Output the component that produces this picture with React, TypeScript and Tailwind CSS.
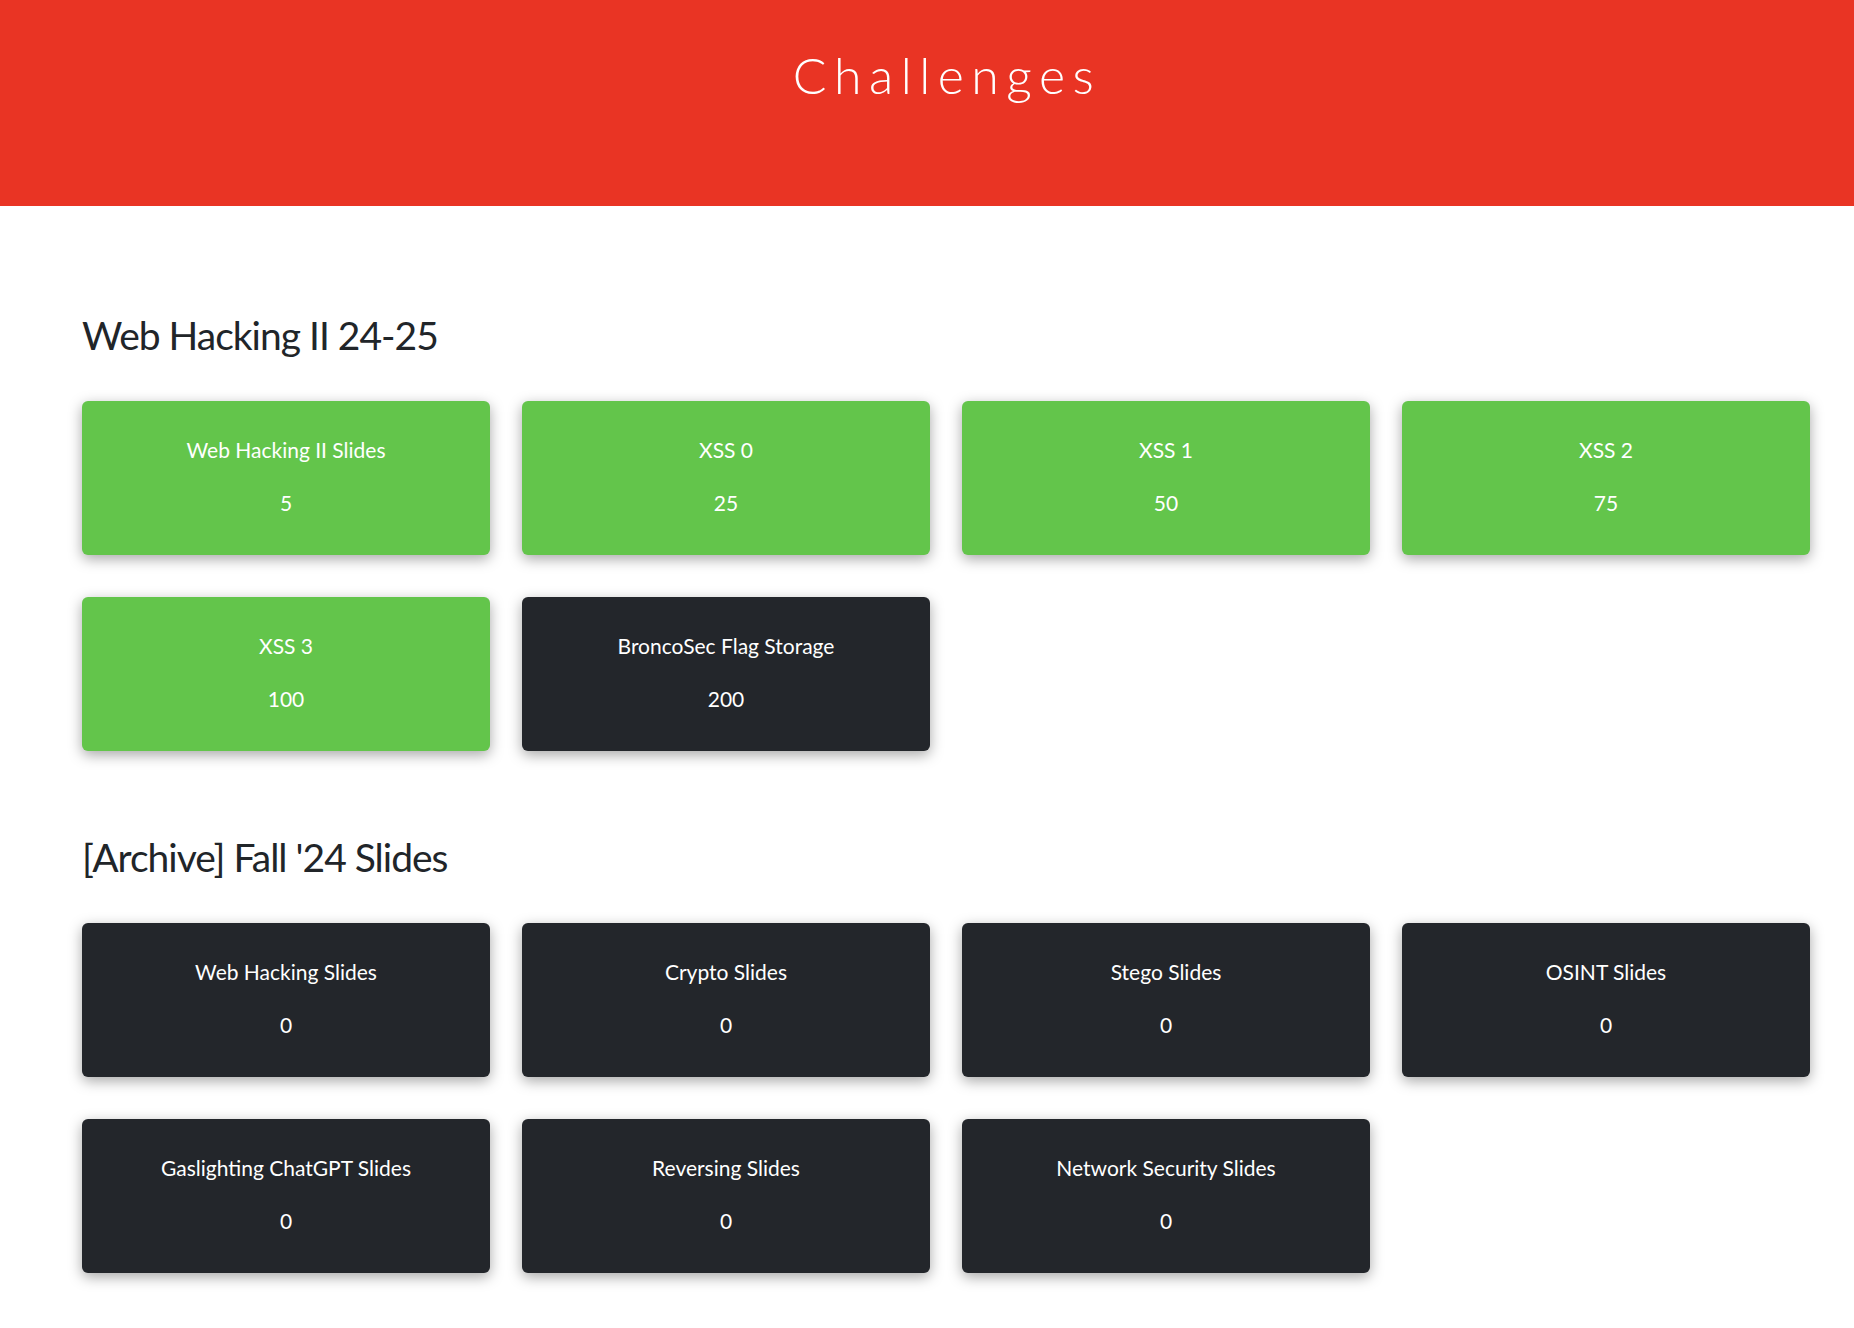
const sections = [
  {
    title: "Web Hacking II 24-25",
    items: [
      { name: "Web Hacking II Slides", points: 5, solved: true },
      { name: "XSS 0", points: 25, solved: true },
      { name: "XSS 1", points: 50, solved: true },
      { name: "XSS 2", points: 75, solved: true },
      { name: "XSS 3", points: 100, solved: true },
      { name: "BroncoSec Flag Storage", points: 200, solved: false },
    ],
  },
  {
    title: "[Archive] Fall '24 Slides",
    items: [
      { name: "Web Hacking Slides", points: 0, solved: false },
      { name: "Crypto Slides", points: 0, solved: false },
      { name: "Stego Slides", points: 0, solved: false },
      { name: "OSINT Slides", points: 0, solved: false },
      { name: "Gaslighting ChatGPT Slides", points: 0, solved: false },
      { name: "Reversing Slides", points: 0, solved: false },
      { name: "Network Security Slides", points: 0, solved: false },
    ],
  },
];

function ChallengeCard({
  name,
  points,
  solved,
}: {
  name: string;
  points: number;
  solved: boolean;
}) {
  return (
    <button
      className={
        "flex h-[154px] flex-col items-center rounded-[6px] pt-[36px] text-white shadow-[0_4px_14px_rgba(0,0,0,0.35)] " +
        (solved ? "bg-[#63c54b]" : "bg-[#23262b]")
      }
    >
      <span className="text-[21px] leading-[25px]">{name}</span>
      <span className="mt-[28px] text-[21px] leading-[25px]">{points}</span>
    </button>
  );
}

export default function App() {
  return (
    <div
      className="min-h-screen bg-white text-[#212529]"
      style={{ fontFamily: "Lato, 'Open Sans', sans-serif" }}
    >
      <header className="flex h-[206px] justify-center bg-[#e93424] pt-[45px]">
        <h1 className="ml-[40px] text-[50px] font-light leading-[60px] tracking-[0.15em] text-white">
          Challenges
        </h1>
      </header>
      <main className="w-[1810px] pl-[82px] pt-[105px]">
        {sections.map((s, i) => (
          <section key={s.title} className={i > 0 ? "mt-[82px]" : ""}>
            <h2 className="text-[39px] leading-[48px] tracking-[-1px]">{s.title}</h2>
            <div className="mt-[42px] grid grid-cols-4 gap-x-[32px] gap-y-[42px]">
              {s.items.map((c) => (
                <ChallengeCard key={c.name} {...c} />
              ))}
            </div>
          </section>
        ))}
      </main>
    </div>
  );
}
